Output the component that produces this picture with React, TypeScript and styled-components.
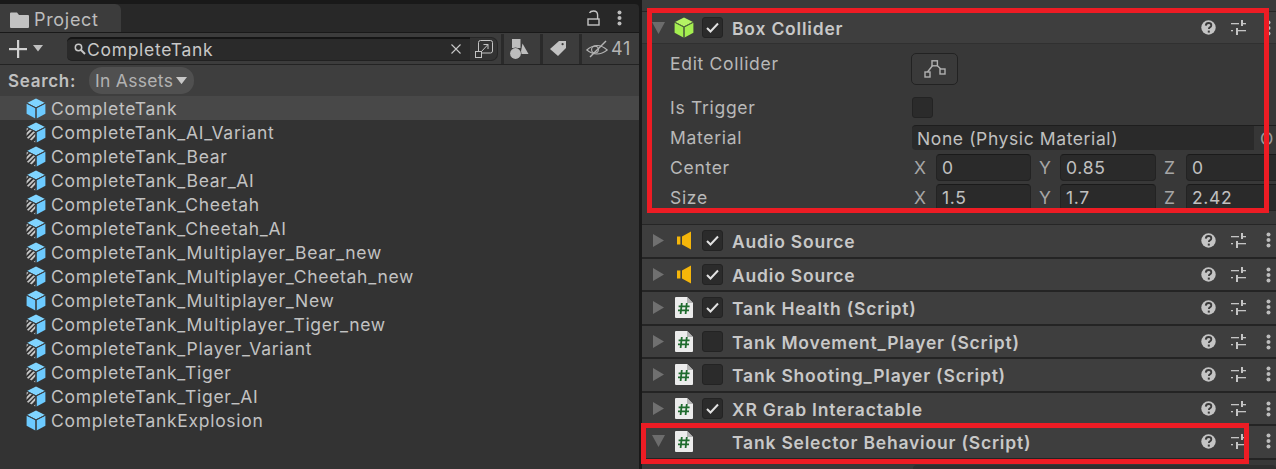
import React, { useId } from "react";
import styled, { createGlobalStyle } from "styled-components";

const GlobalStyle = createGlobalStyle`
  html, body {
    margin: 0;
    padding: 0;
    background: #191919;
  }
  * {
    box-sizing: border-box;
  }
`;

const Page = styled.div`
  position: relative;
  width: 1276px;
  height: 469px;
  overflow: hidden;
  display: flex;
  gap: 3px;
  background: #191919;
  font-family: Inter, "Liberation Sans", sans-serif;
  font-size: 17.5px;
  letter-spacing: 0.7px;
  color: #c4c4c4;
`;

/* ---------- project panel ---------- */

const ProjectPanel = styled.section`
  width: 639px;
  height: 469px;
  flex: none;
  display: flex;
  flex-direction: column;
  padding-top: 4px;
  background: #191919;
`;

const TabBar = styled.div`
  height: 28px;
  flex: none;
  display: flex;
  justify-content: space-between;
  background: #282828;
  border-radius: 0 4px 0 0;
`;

const Tab = styled.div`
  width: 121px;
  display: flex;
  align-items: center;
  gap: 5px;
  padding: 3px 0 0 10px;
  background: #3c3c3c;
  border-radius: 0 6px 0 0;
  font-size: 18px;
  color: #bdbdbd;
`;

const TabTools = styled.div`
  display: flex;
  align-items: center;
  gap: 17px;
  padding-right: 17px;
`;

const Toolbar = styled.div`
  height: 32px;
  flex: none;
  margin-top: 1px;
  display: flex;
  align-items: center;
  padding-left: 9px;
  background: #3c3c3c;
  border-bottom: 1px solid #232323;
`;

const AddGroup = styled.div`
  width: 58px;
  flex: none;
  display: flex;
  align-items: center;
  gap: 6px;
`;

const SearchBox = styled.div`
  width: 403px;
  height: 24px;
  flex: none;
  display: flex;
  align-items: center;
  gap: 1px;
  padding: 0 9px 0 7px;
  background: #2a2a2a;
  border-top: 2px solid #151515;
  border-bottom: 1px solid #212121;
  border-radius: 5px 0 0 5px;
  color: #c8c8c8;
`;

const SearchText = styled.span`
  flex: 1;
`;

const SaveButton = styled.div`
  width: 28px;
  height: 24px;
  flex: none;
  margin-right: 3px;
  display: flex;
  align-items: center;
  justify-content: center;
  background: #333;
  border: 1px solid #262626;
  border-left: none;
  border-radius: 0 7px 7px 0;
`;

const ToolCell = styled.div`
  width: 39px;
  height: 30px;
  flex: none;
  display: flex;
  align-items: center;
  justify-content: center;
  padding-right: 6px;
  border-left: 3px solid #2a2a2a;
`;

const CountCell = styled(ToolCell)`
  width: 60px;
  justify-content: flex-start;
  gap: 3px;
  padding: 0 0 0 4px;
  color: #b4b4b4;
  font-size: 18px;
`;

const SearchRow = styled.div`
  height: 31px;
  flex: none;
  display: flex;
  align-items: center;
  padding-left: 8px;
  background: #3e3e3e;
`;

const SearchLabel = styled.span`
  width: 81px;
  flex: none;
  font-weight: 600;
  font-size: 17px;
  color: #c0c0c0;
`;

const ScopePill = styled.div`
  width: 105px;
  height: 27px;
  display: flex;
  align-items: center;
  gap: 3px;
  padding-left: 6px;
  background: #505050;
  border-radius: 13px;
  letter-spacing: 0.3px;
  color: #b2b2b2;
`;

const AssetList = styled.ul`
  flex: 1;
  margin: 0;
  padding: 0;
  list-style: none;
  background: #333333;
`;

const AssetRow = styled.li<{ $selected?: boolean }>`
  height: 24px;
  display: flex;
  align-items: center;
  gap: 5px;
  padding-left: 26px;
  background: ${(p) => (p.$selected ? "#484848" : "transparent")};
  color: #c2c2c2;
`;

/* ---------- inspector ---------- */

const Inspector = styled.section`
  flex: 1;
  min-width: 0;
  height: 469px;
  display: flex;
  flex-direction: column;
  background: #383838;
`;

const TopGap = styled.div`
  height: 12px;
  flex: none;
  border-bottom: 1px solid #262626;
  background: #3a3a3a;
`;

const ComponentHeader = styled.div<{ $open?: boolean }>`
  height: 32px;
  flex: none;
  display: flex;
  align-items: center;
  padding-left: 10px;
  background: #3e3e3e;
  border-bottom: ${(p) => (p.$open ? "1px solid #303030" : "2px solid #242424")};
`;

const ArrowSlot = styled.div`
  width: 22px;
  flex: none;
  display: flex;
  align-items: center;
`;

const IconSlot = styled.div`
  width: 20px;
  flex: none;
  margin-right: 8px;
  display: flex;
  align-items: center;
  justify-content: center;
`;

const CheckBox = styled.div<{ $hidden?: boolean }>`
  width: 21px;
  height: 21px;
  flex: none;
  display: flex;
  align-items: center;
  justify-content: center;
  background: ${(p) => (p.$hidden ? "transparent" : "#2b2b2b")};
  border: 1px solid ${(p) => (p.$hidden ? "transparent" : "#232323")};
  border-radius: 3px;
`;

const HeaderTitle = styled.span`
  flex: 1;
  margin-left: 9px;
  padding-top: 2px;
  font-weight: 600;
  font-size: 17.5px;
  letter-spacing: 0.8px;
  color: #c8c8c8;
  white-space: nowrap;
`;

const HeaderTools = styled.div`
  width: 70px;
  flex: none;
  margin-right: 5px;
  display: flex;
  align-items: center;
  gap: 15px;

  svg:last-child {
    margin-left: 5px;
  }
`;

const ColliderBody = styled.div`
  height: 181px;
  flex: none;
  padding: 9px 0 0 28px;
  display: flex;
  flex-direction: column;
  border-bottom: 1px solid #262626;
  overflow: hidden;
`;

const PropertyRow = styled.div<{ $height: number }>`
  height: ${(p) => p.$height}px;
  flex: none;
  display: grid;
  grid-template-columns: 242px 1fr;
  align-items: center;
  white-space: nowrap;
`;

const PropertyLabel = styled.span<{ $top?: boolean }>`
  align-self: ${(p) => (p.$top ? "start" : "center")};
  color: #b8b8b8;
`;

const EditButton = styled.div`
  width: 47px;
  height: 32px;
  margin-left: -1px;
  align-self: start;
  display: flex;
  align-items: center;
  justify-content: center;
  background: #3a3a3a;
  border: 1px solid #222;
  border-radius: 5px;
`;

const MaterialField = styled.div`
  height: 25px;
  display: flex;
  align-items: center;
  overflow: hidden;
  background: #2a2a2a;
  border-top: 1px solid #1e1e1e;
  border-radius: 4px 0 0 4px;
  padding-left: 5px;
  letter-spacing: 0.6px;
  color: #c0c0c0;
`;

const MaterialName = styled.span`
  width: 337px;
  flex: none;
`;

const PickerButton = styled.span`
  width: 26px;
  height: 24px;
  display: flex;
  align-items: center;
  padding-left: 6px;
  background: #363636;
  color: #9c9c9c;
`;

const VectorRow = styled.div`
  display: flex;
  align-items: center;
`;

const AxisLabel = styled.span<{ $width: number; $pad: number }>`
  width: ${(p) => p.$width}px;
  flex: none;
  padding-left: ${(p) => p.$pad}px;
  color: #a6a6a6;
`;

const NumberField = styled.div<{ $width: number }>`
  width: ${(p) => p.$width}px;
  height: 27px;
  flex: none;
  display: flex;
  align-items: center;
  padding-left: 5px;
  background: #2a2a2a;
  border: 1px solid #232323;
  border-top-color: #1a1a1a;
  border-radius: 4px;
  color: #c0c0c0;
`;

const ComponentStack = styled.div`
  flex: none;
  display: flex;
  flex-direction: column;

  & > :nth-child(odd) {
    height: 34px;
    padding-bottom: 2px;
  }
  & > :nth-child(even) {
    height: 33px;
  }
`;

const Tail = styled.div`
  flex: 1;
  padding: 5px 0 0 271px;
  background: #383838;
`;

const TailField = styled.div`
  height: 20px;
  background: #2e2e2e;
  border-radius: 4px;
`;

/* overlays: the red annotation boxes drawn on top of the screenshot */
const Highlight = styled.div<{ $x: number; $y: number; $w: number; $h: number }>`
  position: absolute;
  left: ${(p) => p.$x}px;
  top: ${(p) => p.$y}px;
  width: ${(p) => p.$w}px;
  height: ${(p) => p.$h}px;
  border: 5px solid #ed1c24;
  pointer-events: none;
`;

/* ---------- icons ---------- */

const FolderIcon = () => (
  <svg width="19" height="16" viewBox="0 0 19 16">
    <path d="M0 1.5q0-1 1-1h6l2 2.5h9q1 0 1 1V15q0 1-1 1H1q-1 0-1-1z" fill="#c2c2c2" />
  </svg>
);

const LockIcon = () => (
  <svg width="13" height="16" viewBox="0 0 13 16" fill="none" stroke="#c4c4c4" strokeWidth="1.4">
    <rect x="1" y="9" width="11" height="6" />
    <path d="M2.5 3Q3.5 1 6.5 1Q10.6 1 10.6 5V9" />
  </svg>
);

const Dots = () => (
  <svg width="5" height="16" viewBox="0 0 5 16" fill="#bdbdbd">
    <circle cx="2.5" cy="2.5" r="2" />
    <circle cx="2.5" cy="8" r="2" />
    <circle cx="2.5" cy="13.5" r="2" />
  </svg>
);

const PlusIcon = () => (
  <svg width="18" height="18" viewBox="0 0 18 18" fill="#d2d2d2">
    <rect x="8" y="0" width="2.2" height="18" />
    <rect x="0" y="8" width="18" height="2.2" />
  </svg>
);

const Caret = ({ size = 10, color = "#c0c0c0" }: { size?: number; color?: string }) => (
  <svg width={size} height={size * 0.65} viewBox="0 0 10 6.5">
    <path d="M0 0h10L5 6.5z" fill={color} />
  </svg>
);

const SearchGlass = () => (
  <svg width="12" height="12" viewBox="0 0 12 12" fill="none" stroke="#c8c8c8" strokeWidth="1.5">
    <circle cx="4.5" cy="4.5" r="3.2" />
    <path d="M7 7l4 4" strokeWidth="2" />
  </svg>
);

const CloseX = () => (
  <svg width="10" height="10" viewBox="0 0 10 10" stroke="#c8c8c8" strokeWidth="1.1">
    <path d="M.5.5l9 9M9.5.5l-9 9" />
  </svg>
);

const SaveSearchIcon = () => (
  <svg width="18" height="18" viewBox="0 0 18 18" fill="none" stroke="#c4c4c4" strokeWidth="1">
    <path d="M3.5 11V2.5q0-2 2-2h10q2 0 2 2V11q0 2-2 2H7" />
    <rect x=".5" y="11.5" width="6" height="6" />
    <path d="M6 12l7-7.5M8.5 4.5H13V9" />
  </svg>
);

const TypeFilterIcon = () => (
  <svg width="19" height="20" viewBox="0 0 19 20" fill="#bdbdbd">
    <rect x="2" y="0" width="8.5" height="9" />
    <path d="M12.5 4.5L18.5 15H10.5z" />
    <circle cx="5.5" cy="14.5" r="6" fill="#3c3c3c" />
    <circle cx="5.5" cy="14.5" r="5.4" />
  </svg>
);

const TagIcon = () => (
  <svg width="16" height="15" viewBox="0 0 16 15">
    <path d="M9 0h7v7l-8 8-8-7z" fill="#c2c2c2" />
    <circle cx="12.6" cy="3.2" r="1.1" fill="#3c3c3c" />
  </svg>
);

const HiddenEyeIcon = () => (
  <svg width="22" height="18" viewBox="0 0 22 18" fill="none" stroke="#b4b4b4" strokeWidth="1.1">
    <path d="M.8 10Q11 1 21.2 10Q11 18 .8 10z" />
    <circle cx="9" cy="9.6" r="3.4" />
    <path d="M4 17L20 1" strokeWidth="1.4" />
  </svg>
);

const CubeIcon = ({ striped, tone = "blue" }: { striped?: boolean; tone?: "blue" | "green" }) => {
  const clipId = useId();
  const top = tone === "green" ? "#b4f264" : "#7fd4ff";
  const side = tone === "green" ? "#a4ee50" : "#6ccaff";
  const line = tone === "green" ? "#55733a" : "#3c4247";
  return (
    <svg width="20" height="21" viewBox="0 0 20 21">
      <path d="M10 .5l9 4.4L10 9.4 1 4.9z" fill={top} />
      <path d="M19.4 5.8V15.8L10.6 20.5V10.2z" fill={side} />
      {striped ? (
        <g>
          <clipPath id={clipId}>
            <path d="M.6 5.8L9.4 10.2V20.5L.6 15.8z" />
          </clipPath>
          <g clipPath={`url(#${clipId})`} stroke="#c6c6c6" strokeWidth="1.9">
            <path d="M-2 10L6 2M-2 14.8L10 2.8M-1 19L12 6M2 21L14 8M7 22l8-8" />
          </g>
        </g>
      ) : (
        <path d="M.6 5.8L9.4 10.2V20.5L.6 15.8z" fill={side} />
      )}
      <path d="M10 9.8V21M.8 5.1L10 9.8l9.2-4.7" stroke={line} strokeWidth="1" fill="none" />
    </svg>
  );
};

const SpeakerIcon = () => (
  <svg width="16" height="19" viewBox="0 0 16 19">
    <rect x="1" y="5.5" width="3.4" height="8" fill="#f5b60a" />
    <path d="M6 5.5L15 .5v18L6 13.5z" fill="#f5b60a" />
  </svg>
);

const ScriptIcon = () => (
  <svg width="18" height="21" viewBox="0 0 18 21">
    <path d="M0 1q0-1 1-1h11l6 6v14q0 1-1 1H1q-1 0-1-1z" fill="#ececec" />
    <path d="M12 0v6h6z" fill="#b4b4b4" />
    <path
      d="M6.8 6L5.6 17M11.8 6l-1.2 11M3.6 9.4h11M3 13.4h11"
      stroke="#1f6b2e"
      strokeWidth="1.8"
      fill="none"
    />
  </svg>
);

const Triangle = ({ open }: { open?: boolean }) =>
  open ? (
    <svg width="13" height="12" viewBox="0 0 13 12">
      <path d="M0 0h13L6.5 12z" fill="#6c6c6c" />
    </svg>
  ) : (
    <svg width="13" height="13" viewBox="0 0 13 13">
      <path d="M1 0l11 6.5L1 13z" fill="#707070" />
    </svg>
  );

const CheckMark = () => (
  <svg width="13" height="11" viewBox="0 0 13 11" fill="none" stroke="#e2e2e2" strokeWidth="2">
    <path d="M1 6l3.5 3.5L12 1.5" />
  </svg>
);

const HelpIcon = () => (
  <svg width="15" height="15" viewBox="0 0 15 15">
    <circle cx="7.5" cy="7.5" r="7.2" fill="#c4c4c4" />
    <path d="M4.8 5.6q.2-2.6 2.8-2.6 2.7 0 2.7 2.3 0 1.3-1.4 2.1-1 .6-1 1.6" fill="none" stroke="#3a3a3a" strokeWidth="1.9" />
    <rect x="6.8" y="10.6" width="2" height="2" fill="#3a3a3a" />
  </svg>
);

const PresetIcon = () => (
  <svg width="15" height="15" viewBox="0 0 15 15" fill="#c4c4c4">
    <rect x="0" y="3" width="8" height="1.3" />
    <rect x="10" y="0" width="2" height="6" />
    <rect x="10" y="3" width="5" height="1.3" />
    <rect x="0" y="10" width="2" height="1.3" />
    <rect x="5" y="8" width="2" height="7" />
    <rect x="5" y="10" width="10" height="1.3" />
  </svg>
);

const EditColliderIcon = () => (
  <svg width="22" height="18" viewBox="0 0 22 18" fill="none" stroke="#b0b0b0" strokeWidth="1.4">
    <rect x="8" y=".8" width="5.4" height="5" />
    <rect x="1" y="12" width="5" height="5" />
    <rect x="16" y="9" width="5" height="5" />
    <path d="M3.5 12L8.4 5.8M13.4 5.8l3.4 3.2" />
  </svg>
);

/* ---------- data ---------- */

const assets: { name: string; variant?: boolean }[] = [
  { name: "CompleteTank" },
  { name: "CompleteTank_AI_Variant", variant: true },
  { name: "CompleteTank_Bear", variant: true },
  { name: "CompleteTank_Bear_AI", variant: true },
  { name: "CompleteTank_Cheetah", variant: true },
  { name: "CompleteTank_Cheetah_AI", variant: true },
  { name: "CompleteTank_Multiplayer_Bear_new", variant: true },
  { name: "CompleteTank_Multiplayer_Cheetah_new", variant: true },
  { name: "CompleteTank_Multiplayer_New" },
  { name: "CompleteTank_Multiplayer_Tiger_new", variant: true },
  { name: "CompleteTank_Player_Variant", variant: true },
  { name: "CompleteTank_Tiger", variant: true },
  { name: "CompleteTank_Tiger_AI", variant: true },
  { name: "CompleteTankExplosion" },
];

type Part = { title: string; icon: "audio" | "script"; check: "on" | "off" | "none"; open?: boolean };

const parts: Part[] = [
  { title: "Audio Source", icon: "audio", check: "on" },
  { title: "Audio Source", icon: "audio", check: "on" },
  { title: "Tank Health (Script)", icon: "script", check: "on" },
  { title: "Tank Movement_Player (Script)", icon: "script", check: "off" },
  { title: "Tank Shooting_Player (Script)", icon: "script", check: "off" },
  { title: "XR Grab Interactable", icon: "script", check: "on" },
  { title: "Tank Selector Behaviour (Script)", icon: "script", check: "none", open: true },
];

const ComponentRow = ({ part }: { part: Part }) => (
  <ComponentHeader>
    <ArrowSlot>
      <Triangle open={part.open} />
    </ArrowSlot>
    <IconSlot>{part.icon === "audio" ? <SpeakerIcon /> : <ScriptIcon />}</IconSlot>
    <CheckBox $hidden={part.check === "none"}>{part.check === "on" && <CheckMark />}</CheckBox>
    <HeaderTitle>{part.title}</HeaderTitle>
    <HeaderTools>
      <HelpIcon />
      <PresetIcon />
      <Dots />
    </HeaderTools>
  </ComponentHeader>
);

const VectorFields = ({ x, y, z }: { x: string; y: string; z: string }) => (
  <VectorRow>
    <AxisLabel $width={24} $pad={2}>X</AxisLabel>
    <NumberField $width={95}>{x}</NumberField>
    <AxisLabel $width={29} $pad={8}>Y</AxisLabel>
    <NumberField $width={96}>{y}</NumberField>
    <AxisLabel $width={30} $pad={8}>Z</AxisLabel>
    <NumberField $width={96}>{z}</NumberField>
  </VectorRow>
);

const App: React.FC = () => {
  return (
    <Page>
      <GlobalStyle />
      <ProjectPanel>
        <TabBar>
          <Tab>
            <FolderIcon />
            Project
          </Tab>
          <TabTools>
            <LockIcon />
            <Dots />
          </TabTools>
        </TabBar>
        <Toolbar>
          <AddGroup>
            <PlusIcon />
            <Caret />
          </AddGroup>
          <SearchBox>
            <SearchGlass />
            <SearchText>CompleteTank</SearchText>
            <CloseX />
          </SearchBox>
          <SaveButton>
            <SaveSearchIcon />
          </SaveButton>
          <ToolCell>
            <TypeFilterIcon />
          </ToolCell>
          <ToolCell>
            <TagIcon />
          </ToolCell>
          <CountCell>
            <HiddenEyeIcon />
            41
          </CountCell>
        </Toolbar>
        <SearchRow>
          <SearchLabel>Search:</SearchLabel>
          <ScopePill>
            In Assets
            <Caret size={11} color="#c8c8c8" />
          </ScopePill>
        </SearchRow>
        <AssetList>
          {assets.map((a, i) => (
            <AssetRow key={a.name} $selected={i === 0}>
              <CubeIcon striped={a.variant} />
              {a.name}
            </AssetRow>
          ))}
        </AssetList>
      </ProjectPanel>

      <Inspector>
        <TopGap />
        <ComponentHeader $open>
          <ArrowSlot>
            <Triangle open />
          </ArrowSlot>
          <IconSlot>
            <CubeIcon tone="green" />
          </IconSlot>
          <CheckBox>
            <CheckMark />
          </CheckBox>
          <HeaderTitle>Box Collider</HeaderTitle>
          <HeaderTools>
            <HelpIcon />
            <PresetIcon />
            <Dots />
          </HeaderTools>
        </ComponentHeader>
        <ColliderBody>
          <PropertyRow $height={40}>
            <PropertyLabel $top>Edit Collider</PropertyLabel>
            <EditButton>
              <EditColliderIcon />
            </EditButton>
          </PropertyRow>
          <PropertyRow $height={29}>
            <PropertyLabel>Is Trigger</PropertyLabel>
            <CheckBox />
          </PropertyRow>
          <PropertyRow $height={31}>
            <PropertyLabel>Material</PropertyLabel>
            <MaterialField>
              <MaterialName>None (Physic Material)</MaterialName>
              <PickerButton>O</PickerButton>
            </MaterialField>
          </PropertyRow>
          <PropertyRow $height={29}>
            <PropertyLabel>Center</PropertyLabel>
            <VectorFields x="0" y="0.85" z="0" />
          </PropertyRow>
          <PropertyRow $height={31}>
            <PropertyLabel>Size</PropertyLabel>
            <VectorFields x="1.5" y="1.7" z="2.42" />
          </PropertyRow>
        </ColliderBody>
        <ComponentStack>
          {parts.map((p, i) => (
            <ComponentRow key={i} part={p} />
          ))}
        </ComponentStack>
        <Tail>
          <TailField />
        </Tail>
      </Inspector>

      <Highlight $x={647} $y={8} $w={622} $h={205} />
      <Highlight $x={641} $y={423} $w={608} $h={41} />
    </Page>
  );
};

export default App;
